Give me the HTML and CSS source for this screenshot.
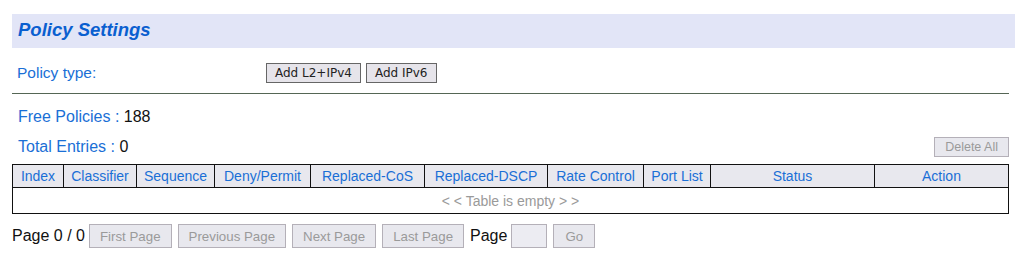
FILE: index.html
```html
<!DOCTYPE html>
<html lang="en">
<head>
    <meta charset="UTF-8">
    <title>Policy Settings</title>
    <link rel="stylesheet" href="styles.css">
</head>
<body>
    <div class="page">
        <div class="title-bar"><h1>Policy Settings</h1></div>

        <div class="type-row">
            <span class="label">Policy type:</span>
            <div class="add-btns">
                <button class="add-btn">Add L2+IPv4</button>
                <button class="add-btn">Add IPv6</button>
            </div>
        </div>
        <hr class="divider">

        <div class="info-row"><span class="label">Free Policies : </span><span class="value">188</span></div>
        <div class="info-row total-row">
            <div><span class="label">Total Entries : </span><span class="value">0</span></div>
            <button class="grey-btn delete-btn">Delete All</button>
        </div>

        <table class="policy-table">
            <tr>
                <th style="width: 50px;">Index</th>
                <th style="width: 72px;">Classifier</th>
                <th style="width: 77px;">Sequence</th>
                <th style="width: 95px;">Deny/Permit</th>
                <th style="width: 113px;">Replaced-CoS</th>
                <th style="width: 122px;">Replaced-DSCP</th>
                <th style="width: 95px;">Rate Control</th>
                <th style="width: 66px;">Port List</th>
                <th style="width: 163px;">Status</th>
                <th>Action</th>
            </tr>
            <tr>
                <td colspan="10" class="empty">&lt; &lt; Table is empty &gt; &gt;</td>
            </tr>
        </table>

        <div class="pager">
            <span class="page-text">Page 0 / 0</span>
            <button class="grey-btn">First Page</button>
            <button class="grey-btn">Previous Page</button>
            <button class="grey-btn">Next Page</button>
            <button class="grey-btn">Last Page</button>
            <span class="page-text">Page</span>
            <input type="text" class="page-input">
            <button class="grey-btn go-btn">Go</button>
        </div>
    </div>
</body>
</html>
```

FILE: styles.css
```css
body { margin: 0; font-family: Arial, "Liberation Sans", sans-serif; background: white; }
.page { padding: 14px 11px 0 12px; }
.title-bar { height: 34px; margin-right: -6px; background: #e2e5f7; display: flex; align-items: center; padding-left: 6px; }
.title-bar h1 { margin: 0 0 3px 0; font-size: 18.5px; font-style: italic; font-weight: bold; color: #0a5fd0; }
.type-row { display: flex; align-items: center; height: 20px; margin-top: 15px; padding-left: 5px; }
.type-row .label { width: 249px; font-size: 15.5px; }
.label { color: #1a6fd6; }
.value { color: #111; }
.add-btns { display: flex; gap: 5px; }
.add-btn { height: 20px; padding: 0 8px; font-family: "DejaVu Sans", Verdana, sans-serif; font-size: 12px; color: #222; background: #e6e4ea; border: 1px solid #666; border-radius: 0; }
.divider { margin: 10px 0 0 0; border: none; border-top: 1px solid #556655; height: 0; }
.info-row { font-size: 16px; padding-left: 6px; height: 18px; line-height: 18px; margin-top: 14px; }
.total-row { display: flex; justify-content: space-between; align-items: center; margin-top: 11px; height: 20px; }
.grey-btn { height: 24px; padding: 0 10px; font-family: Arial, "Liberation Sans", sans-serif; font-size: 13.3px; color: #9a9a9a; background: #e8e8ee; border: 1px solid #b4b0b8; border-radius: 0; }
.delete-btn { height: 20px; font-size: 12.5px; padding: 0 10px; }
.policy-table { width: 997px; margin-top: 7px; border-collapse: collapse; table-layout: fixed; font-size: 14px; }
.policy-table th { height: 22px; padding: 0; font-weight: normal; color: #1a6fd6; background: #e8e8ee; border: 1px solid #111; }
.policy-table td { height: 25px; padding: 0; border: 1px solid #111; }
.empty { text-align: center; color: #9a9a9a; }
.pager { display: flex; align-items: center; gap: 6px; margin-top: 10px; }
.page-text { font-size: 16px; color: #111; margin-right: -2px; }
.page-input { width: 34px; height: 22px; padding: 0; margin: 0; border: 1px solid #b4b0b8; background: #ececf2; }
.go-btn { padding: 0 11px; }
```
